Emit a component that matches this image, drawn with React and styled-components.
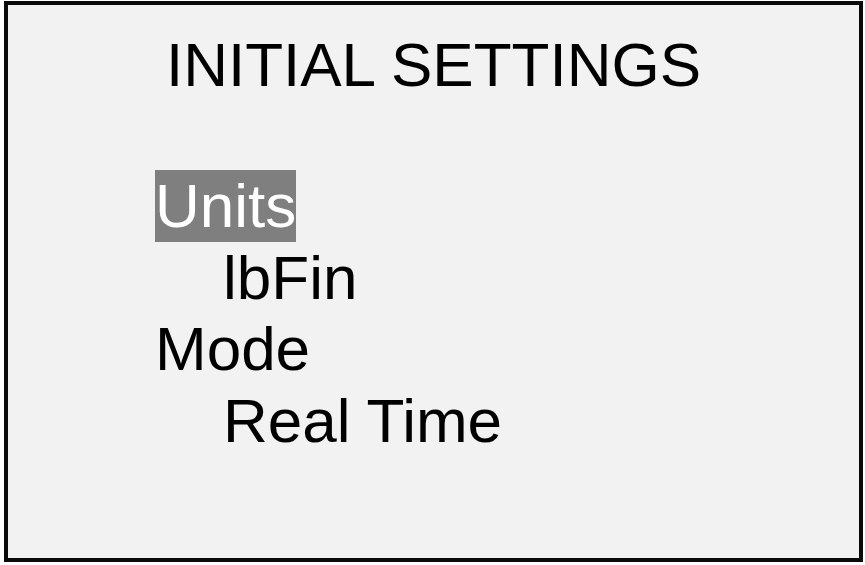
import React from "react";
import styled, { createGlobalStyle } from "styled-components";

const Global = createGlobalStyle`
  html, body { margin: 0; padding: 0; background: #ffffff; }
  body { font-family: "Liberation Sans", Arial, sans-serif; }
`;

const Screen = styled.div`
  box-sizing: border-box;
  margin: 1px 0 0 4px;
  width: 859px;
  height: 561px;
  border: 4px solid #0a0a0a;
  background: #f2f2f2;
  padding-top: 23.5px;
  color: #000;
  font-family: "Liberation Sans", Arial, sans-serif;
  font-size: 62px;
`;

const Title = styled.h1`
  margin: 0;
  font-size: 62px;
  font-weight: normal;
  line-height: 72px;
  text-align: center;
`;

const List = styled.div`
  display: flex;
  flex-direction: column;
  align-items: flex-start;
  margin-top: 69.5px;
  padding-left: 147px;
`;

const Item = styled.div`
  line-height: 71.7px;
  height: 71.7px;
  white-space: nowrap;
  padding-left: ${(p) => (p.$indent ? "68px" : "0")};
  background: ${(p) => (p.$selected ? "#7f7f7f" : "transparent")};
  color: ${(p) => (p.$selected ? "#ffffff" : "#000000")};
`;

export default function App() {
  return (
    <>
      <Global />
      <Screen>
        <Title>INITIAL SETTINGS</Title>
        <List>
          <Item $selected>Units</Item>
          <Item $indent>lbFin</Item>
          <Item>Mode</Item>
          <Item $indent>Real Time</Item>
        </List>
      </Screen>
    </>
  );
}
